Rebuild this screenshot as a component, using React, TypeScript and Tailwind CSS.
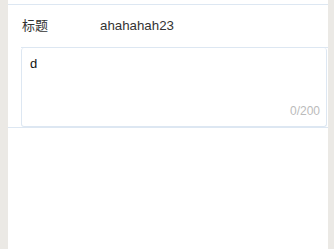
export default function App() {
  return (
    <div className="flex h-[249px] w-[334px] bg-[#ebe9e5] pl-[8px] pr-[6px] font-['Liberation_Sans','Noto_Sans_CJK_SC',sans-serif]">
      <div className="flex-1 bg-white">
        <div className="h-[4px]" />
        <div className="border-t border-[#dde7f2]">
          <div className="flex h-[42px] items-center pl-[14px] text-[13px] text-[#333]">
            <span className="w-[78px]">标题</span>
            <span className="text-[13.3px]">ahahahah23</span>
          </div>
          <div className="ml-[13px] border-t border-[#dde7f2] pr-[1px]">
            <div className="flex h-[79px] flex-col rounded-[3px] border border-t-0 border-[#dde7f2] pl-[8px] pr-[6px] pt-[6px] pb-[6px]">
              <div className="flex-1 text-[13px] text-[#111]">d</div>
              <div className="text-right text-[12px] text-[#bbb]">0/200</div>
            </div>
          </div>
        </div>
        <div className="border-t border-[#dde7f2]" />
      </div>
    </div>
  )
}
